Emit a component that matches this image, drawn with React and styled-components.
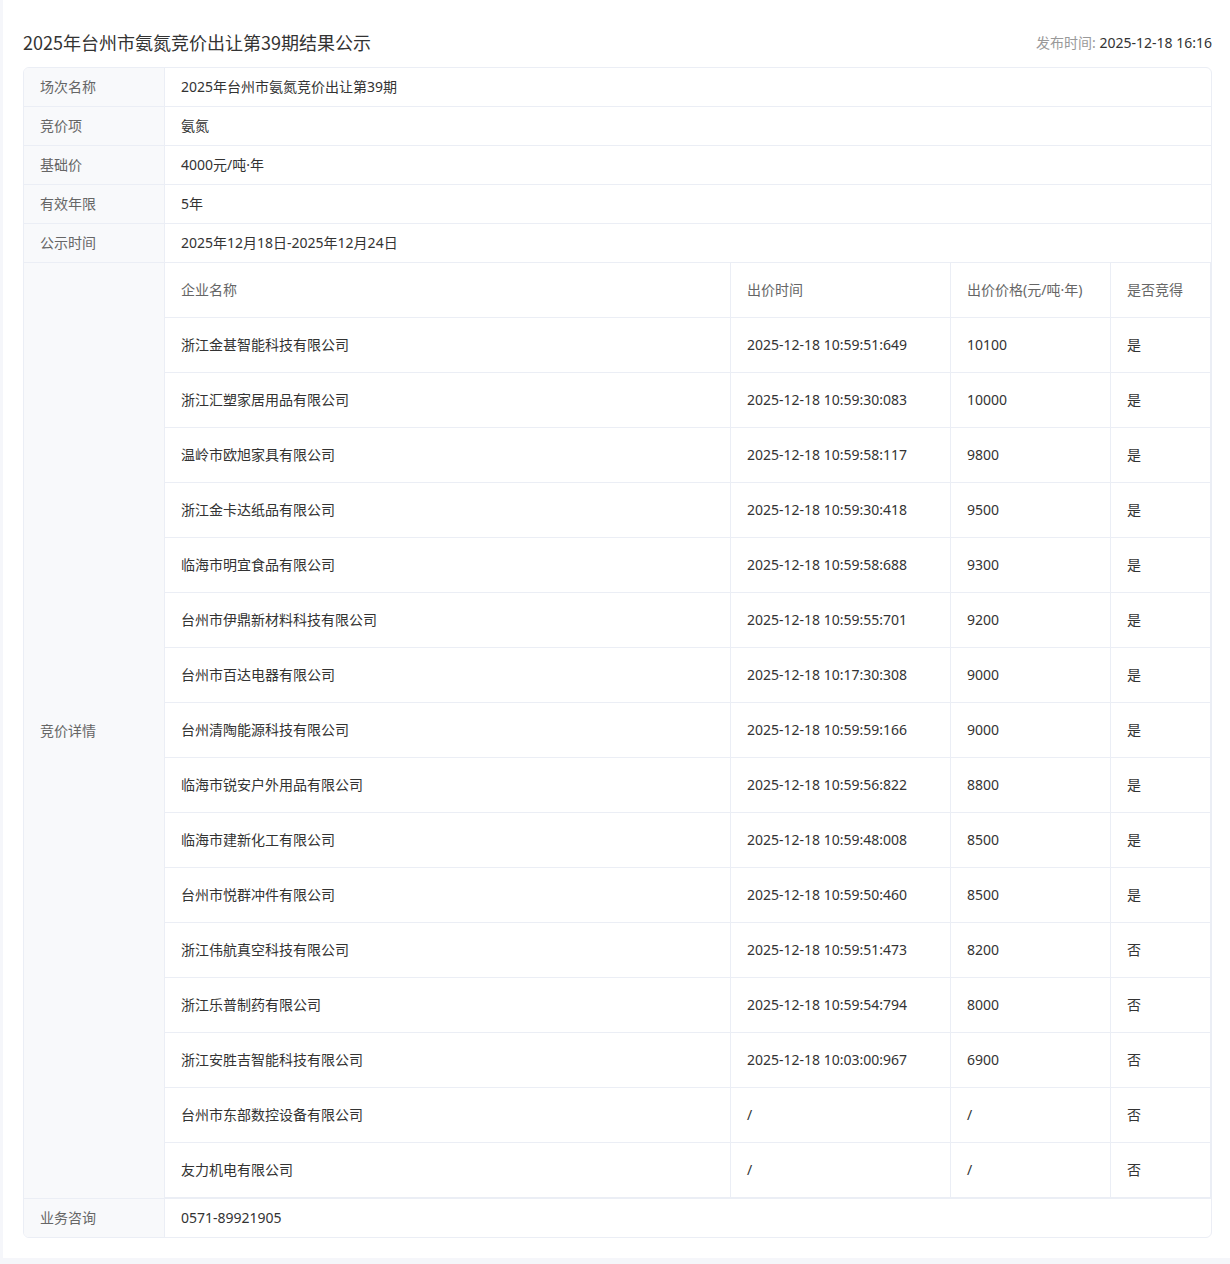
import React from "react";
import styled, { createGlobalStyle } from "styled-components";

const Global = createGlobalStyle`
  html, body { margin: 0; padding: 0; background: #f5f6fa; }
  body { font-family: "Noto Sans", "Noto Sans CJK SC", "Liberation Sans", sans-serif; color: #333; }
  * { box-sizing: border-box; }
`;

const Panel = styled.div`
  margin-left: 3px;
  background: #fff;
  padding: 20px 18px 20px 20px;
`;

const Header = styled.div`
  height: 47px;
  display: flex;
  align-items: center;
  justify-content: space-between;
  padding-bottom: 3px;
`;

const Title = styled.h1`
  margin: 0;
  font-size: 18px;
  font-weight: 400;
  color: #333;
  font-family: "Noto Sans CJK SC", sans-serif;
`;

const Published = styled.div`
  font-size: 14px;
  color: #333;
  span { color: #999; }
`;

const Table = styled.div`
  border: 1px solid #ebeef5;
  border-radius: 6px;
  overflow: hidden;
`;

const Row = styled.div`
  display: grid;
  grid-template-columns: 141px 1fr;
  border-bottom: ${(p) => (p.$last ? "none" : "1px solid #ebeef5")};
`;

const Label = styled.div`
  background: #f8f9fb;
  border-right: 1px solid #ebeef5;
  color: #666;
  font-size: 14px;
  padding: 0 16px 2px;
  min-height: 38px;
  display: flex;
  align-items: center;
`;

const Value = styled.div`
  font-size: 14px;
  color: #333;
  padding: ${(p) => (p.$flush ? "0" : "0 16px 2px")};
  min-height: 38px;
  display: flex;
  align-items: ${(p) => (p.$flush ? "stretch" : "center")};
  flex-direction: ${(p) => (p.$flush ? "column" : "row")};
`;

const Bids = styled.div`
  display: grid;
  grid-template-columns: 1fr 220px 160px 100px;
`;

const Cell = styled.div`
  height: 55px;
  padding: 0 16px 2px 16px;
  display: flex;
  align-items: center;
  font-size: 14px;
  color: ${(p) => (p.$head ? "#666" : "#333")};
  border-right: 1px solid #ebeef5;
  border-bottom: 1px solid #ebeef5;
`;

const bids = [
  ["浙江金甚智能科技有限公司", "2025-12-18 10:59:51:649", "10100", "是"],
  ["浙江汇塑家居用品有限公司", "2025-12-18 10:59:30:083", "10000", "是"],
  ["温岭市欧旭家具有限公司", "2025-12-18 10:59:58:117", "9800", "是"],
  ["浙江金卡达纸品有限公司", "2025-12-18 10:59:30:418", "9500", "是"],
  ["临海市明宜食品有限公司", "2025-12-18 10:59:58:688", "9300", "是"],
  ["台州市伊鼎新材料科技有限公司", "2025-12-18 10:59:55:701", "9200", "是"],
  ["台州市百达电器有限公司", "2025-12-18 10:17:30:308", "9000", "是"],
  ["台州清陶能源科技有限公司", "2025-12-18 10:59:59:166", "9000", "是"],
  ["临海市锐安户外用品有限公司", "2025-12-18 10:59:56:822", "8800", "是"],
  ["临海市建新化工有限公司", "2025-12-18 10:59:48:008", "8500", "是"],
  ["台州市悦群冲件有限公司", "2025-12-18 10:59:50:460", "8500", "是"],
  ["浙江伟航真空科技有限公司", "2025-12-18 10:59:51:473", "8200", "否"],
  ["浙江乐普制药有限公司", "2025-12-18 10:59:54:794", "8000", "否"],
  ["浙江安胜吉智能科技有限公司", "2025-12-18 10:03:00:967", "6900", "否"],
  ["台州市东部数控设备有限公司", "/", "/", "否"],
  ["友力机电有限公司", "/", "/", "否"],
];

const info = [
  ["场次名称", "2025年台州市氨氮竞价出让第39期"],
  ["竞价项", "氨氮"],
  ["基础价", "4000元/吨·年"],
  ["有效年限", "5年"],
  ["公示时间", "2025年12月18日-2025年12月24日"],
];

export default function App() {
  return (
    <>
      <Global />
      <Panel>
        <Header>
          <Title>2025年台州市氨氮竞价出让第39期结果公示</Title>
          <Published>
            <span>发布时间: </span>2025-12-18 16:16
          </Published>
        </Header>
        <Table>
          {info.map(([k, v]) => (
            <Row key={k}>
              <Label>{k}</Label>
              <Value>{v}</Value>
            </Row>
          ))}
          <Row>
            <Label>竞价详情</Label>
            <Value $flush>
              <Bids>
                <Cell $head>企业名称</Cell>
                <Cell $head>出价时间</Cell>
                <Cell $head>出价价格(元/吨·年)</Cell>
                <Cell $head>是否竞得</Cell>
                {bids.map((b) =>
                  b.map((c, i) => <Cell key={b[0] + i}>{c}</Cell>)
                )}
              </Bids>
            </Value>
          </Row>
          <Row $last>
            <Label>业务咨询</Label>
            <Value>0571-89921905</Value>
          </Row>
        </Table>
      </Panel>
    </>
  );
}
